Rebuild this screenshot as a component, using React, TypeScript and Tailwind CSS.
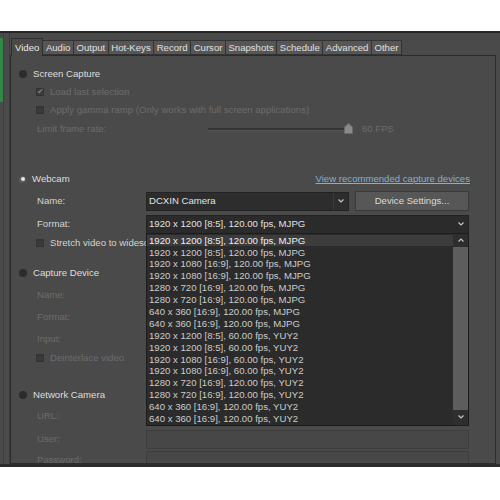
import React from "react"

const tabs = ["Video", "Audio", "Output", "Hot-Keys", "Record", "Cursor", "Snapshots", "Schedule", "Advanced", "Other"]

const formats = [
  "1920 x 1200 [8:5], 120.00 fps, MJPG",
  "1920 x 1200 [8:5], 120.00 fps, MJPG",
  "1920 x 1080 [16:9], 120.00 fps, MJPG",
  "1920 x 1080 [16:9], 120.00 fps, MJPG",
  "1280 x 720 [16:9], 120.00 fps, MJPG",
  "1280 x 720 [16:9], 120.00 fps, MJPG",
  "640 x 360 [16:9], 120.00 fps, MJPG",
  "640 x 360 [16:9], 120.00 fps, MJPG",
  "1920 x 1200 [8:5], 60.00 fps, YUY2",
  "1920 x 1200 [8:5], 60.00 fps, YUY2",
  "1920 x 1080 [16:9], 60.00 fps, YUY2",
  "1920 x 1080 [16:9], 60.00 fps, YUY2",
  "1280 x 720 [16:9], 120.00 fps, YUY2",
  "1280 x 720 [16:9], 120.00 fps, YUY2",
  "640 x 360 [16:9], 120.00 fps, YUY2",
  "640 x 360 [16:9], 120.00 fps, YUY2",
]

function Radio({ selected }: { selected?: boolean }) {
  return selected ? (
    <span className="w-[7px] h-[7px] rounded-full bg-[#5a5a5a] flex items-center justify-center">
      <span className="w-[4px] h-[4px] rounded-full bg-[#e6e6e6]" />
    </span>
  ) : (
    <span className="w-[8px] h-[8px] rounded-full bg-[#2c2c2c]" />
  )
}

function Check({ checked }: { checked?: boolean }) {
  return (
    <span className="w-[8px] h-[8px] bg-[#3a3a3a] border border-[#333] flex items-center justify-center text-[8px] leading-none text-[#7a7a7a]">
      {checked ? "✔" : ""}
    </span>
  )
}

function Chevron({ className }: { className?: string }) {
  return (
    <svg width="6" height="4" viewBox="0 0 6 4" className={className}>
      <path d="M0.5 0.5 L3 3 L5.5 0.5" stroke="#c8c8c8" strokeWidth="1.1" fill="none" />
    </svg>
  )
}

function Section({ label, selected }: { label: string; selected?: boolean }) {
  return (
    <div className="flex items-center h-[18px] pl-[8px] gap-[6px] text-[#dedede]">
      <Radio selected={selected} />
      <span>{label}</span>
    </div>
  )
}

function DisabledField({ label, className }: { label: string; className?: string }) {
  return (
    <div className={`flex items-center h-[20px] pl-[26px] ${className ?? ""}`}>
      <span className="w-[109px] text-[#6c6c6c]">{label}</span>
      <div className="w-[323px] h-[19px] bg-[#474747] border border-[#3e3e3e]" />
    </div>
  )
}

export default function App() {
  return (
    <div className="w-[500px] h-[500px] bg-white overflow-hidden font-['Liberation_Sans',Arial,sans-serif] text-[9.6px] leading-none">
      <div className="h-[31px]" />
      <div className="h-[436px] bg-[#4a4a4a] border-t-2 border-t-[#262626] border-b-[3px] border-b-[#2b2b2b] flex overflow-hidden">
        {/* left pane edge */}
        <div className="w-[10px] flex border-r border-[#3c3c3c]">
          <div className="w-[3px] flex flex-col">
            <div className="h-[5px]" />
            <div className="h-[64px] bg-[#2f8a45]" />
          </div>
          <div className="w-[1px] bg-[#3f3f3f]" />
        </div>

        <div className="flex-1 flex flex-col pt-[5px] pr-[4px]">
          {/* tabs */}
          <div className="flex items-end h-[17px] pl-[1px] shrink-0">
            {tabs.map((t, i) =>
              i === 0 ? (
                <div key={t} className="h-[18px] -mb-[1px] px-[3px] flex items-center bg-[#4a4a4a] border border-b-0 border-[#2f2f2f] text-[#e8e8e8] relative z-10">
                  {t}
                </div>
              ) : (
                <div key={t} className="h-[15px] px-[2.5px] flex items-center bg-[#565656] border border-l-0 border-[#333] text-[#e0e0e0]">
                  {t}
                </div>
              )
            )}
          </div>

          {/* panel */}
          <div className="flex-1 bg-[#4a4a4a] border border-[#2c2c2c] flex flex-col overflow-hidden [&>*]:shrink-0">
            <div className="h-[9px]" />
            <Section label="Screen Capture" />
            <div className="flex items-center h-[18px] pl-[25px] gap-[6px] text-[#6c6c6c]">
              <Check checked />
              <span>Load last selection</span>
            </div>
            <div className="flex items-center h-[18px] pl-[25px] gap-[6px] text-[#6c6c6c]">
              <Check />
              <span>Apply gamma ramp (Only works with full screen applications)</span>
            </div>
            <div className="flex items-center h-[20px] pl-[26px] text-[#6c6c6c]">
              <span className="w-[171px]">Limit frame rate:</span>
              <div className="w-[140px] h-[3px] bg-[#343434] border-b border-[#555] relative">
                <svg width="9" height="11" viewBox="0 0 9 11" className="absolute right-[-5px] top-[-5px]">
                  <path d="M4.5 0.5 L8.5 4 L8.5 10.5 L0.5 10.5 L0.5 4 Z" fill="#8a8a8a" stroke="#6a6a6a" />
                </svg>
              </div>
              <span className="ml-[14px]">60 FPS</span>
            </div>

            <div className="h-[31px]" />
            <div className="flex items-center justify-between pr-[25px]">
              <Section label="Webcam" selected />
              <span className="text-[#86aed3] underline">View recommended capture devices</span>
            </div>

            <div className="flex items-center h-[20px] pl-[26px] mt-[3px] text-[#d4d4d4]">
              <span className="w-[109px]">Name:</span>
              <div className="w-[203px] h-[19px] bg-[#2d2d2d] border border-[#232323] flex items-center">
                <span className="flex-1 pl-[2px] text-[#e2e2e2]">DCXIN Camera</span>
                <div className="w-[15px] h-full border-l border-[#3a3a3a] flex items-center justify-center">
                  <Chevron />
                </div>
              </div>
              <div className="ml-[6px] w-[114px] h-[20px] bg-[#575757] border border-[#3a3a3a] flex items-center justify-center text-[#dadada]">
                Device Settings...
              </div>
            </div>

            <div className="flex items-center h-[20px] pl-[26px] mt-[3px] text-[#d4d4d4]">
              <span className="w-[109px]">Format:</span>
              <div className="w-[323px] h-[19px] bg-[#2b2b2b] border border-[#222] flex items-center relative">
                <span className="flex-1 pl-[2px] text-[#e2e2e2]">1920 x 1200 [8:5], 120.00 fps, MJPG</span>
                <div className="w-[15px] h-full flex items-center justify-center">
                  <Chevron />
                </div>

                {/* open dropdown list */}
                <div className="absolute left-[-1px] top-[17px] w-[323px] h-[193px] bg-[#2b2b2b] border border-[#1c1c1c] z-20 flex">
                  <div className="flex-1 flex flex-col pt-[1px]">
                    {formats.map((f, i) => (
                      <div
                        key={i}
                        className={`h-[11.9px] shrink-0 flex items-center pl-[2px] ${i === 0 ? "bg-[#3c3c3c] text-[#f0f0f0]" : "text-[#cbcbcb]"}`}
                      >
                        {f}
                      </div>
                    ))}
                  </div>
                  <div className="w-[15px] flex flex-col bg-[#2e2e2e]">
                    <div className="h-[13px] flex items-center justify-center">
                      <Chevron className="rotate-180" />
                    </div>
                    <div className="flex-1 bg-[#5d5d5d]" />
                    <div className="h-[15px] flex items-center justify-center">
                      <Chevron />
                    </div>
                  </div>
                </div>
              </div>
            </div>

            <div className="flex items-center h-[18px] pl-[25px] gap-[6px] text-[#d4d4d4]">
              <Check />
              <span>Stretch video to widescreen</span>
            </div>

            <div className="h-[12px]" />
            <Section label="Capture Device" />
            <DisabledField label="Name:" className="mt-[3px]" />
            <DisabledField label="Format:" className="mt-[2px]" />
            <DisabledField label="Input:" className="mt-[2px]" />
            <div className="flex items-center h-[18px] pl-[25px] gap-[6px] text-[#6c6c6c]">
              <Check />
              <span>Deinterlace video</span>
            </div>

            <div className="h-[19px]" />
            <Section label="Network Camera" />
            <DisabledField label="URL:" className="mt-[2px]" />
            <DisabledField label="User:" className="mt-[3px]" />
            <DisabledField label="Password:" className="mt-[1px]" />
          </div>
        </div>
      </div>
    </div>
  )
}
